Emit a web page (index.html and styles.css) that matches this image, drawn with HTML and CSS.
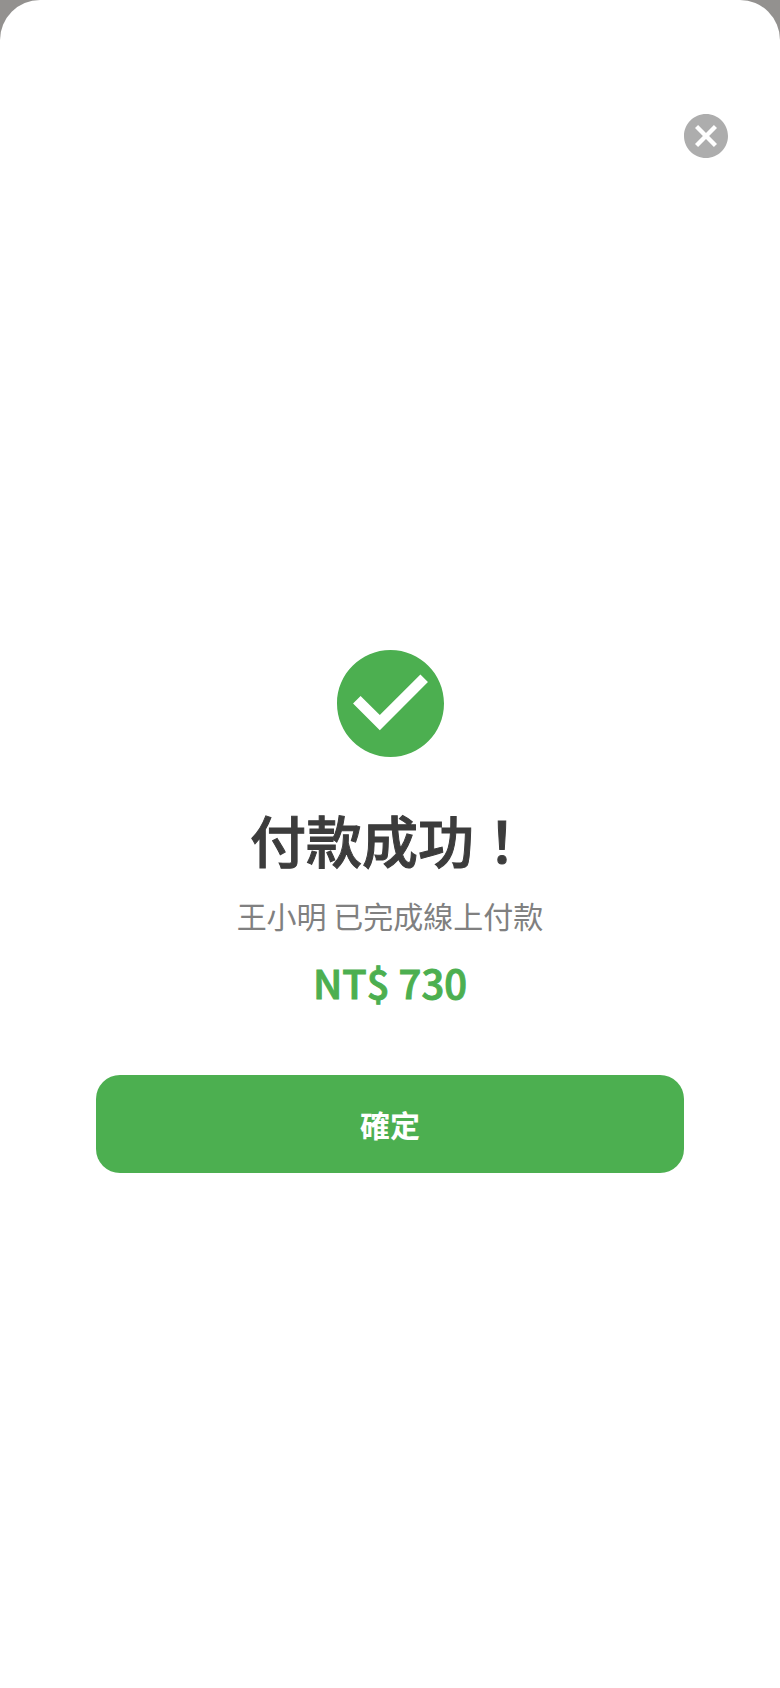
FILE: index.html
```html
<!DOCTYPE html>
<html lang="zh-Hant">

<head>
	<meta charset="UTF-8">
	<meta name="viewport" content="width=device-width, initial-scale=1">
	<title>付款成功</title>
	<link rel="stylesheet" href="styles.css">
</head>

<body>
	<main class="sheet">
		<header class="sheet-header">
			<button type="button" class="close-btn" aria-label="關閉">
				<svg viewBox="2 2 20 20" aria-hidden="true">
					<path fill="#adadad" d="M12 2C6.47 2 2 6.47 2 12s4.47 10 10 10 10-4.47 10-10S17.53 2 12 2zm5 13.59L15.59 17 12 13.41 8.41 17 7 15.59 10.59 12 7 8.41 8.41 7 12 10.59 15.59 7 17 8.41 13.41 12 17 15.59z"/>
				</svg>
			</button>
		</header>

		<section class="result">
			<svg class="result-icon" viewBox="2 2 20 20" aria-hidden="true">
				<path fill="#4caf50" d="M12 2C6.48 2 2 6.48 2 12s4.48 10 10 10 10-4.48 10-10S17.52 2 12 2zm-2 15l-5-5 1.41-1.41L10 14.17l7.59-7.59L19 8l-9 9z"/>
			</svg>
			<h1 class="title">付款成功！</h1>
			<p class="message">王小明 已完成線上付款</p>
			<p class="amount">NT$ 730</p>
			<button type="button" class="confirm-btn">確定</button>
		</section>
	</main>
</body>

</html>
```
FILE: styles.css
```css
* {
	box-sizing: border-box;
}

body {
	margin: 0;
	background-color: #93918f;
	font-family: "Noto Sans CJK TC", sans-serif;
}

.sheet {
	display: flex;
	flex-direction: column;
	min-height: 100vh;
	padding: 114px 52px 24px;
	background-color: #fff;
	border-radius: 40px 40px 0 0;
}

.sheet-header {
	display: flex;
	justify-content: flex-end;
}

.close-btn {
	width: 44px;
	height: 44px;
	padding: 0;
	border: none;
	background: none;
	cursor: pointer;
}

.close-btn svg {
	display: block;
	width: 100%;
}

.result {
	flex: 1;
	display: flex;
	flex-direction: column;
	align-items: center;
	justify-content: center;
	padding: 0 44px;
	text-align: center;
}

.result-icon {
	width: 107px;
	height: 107px;
	margin-bottom: 40px;
}

.title {
	margin: 0 0 12px;
	color: #3c3c3c;
	font-size: 56px;
	font-weight: 500;
	line-height: 84px;
	-webkit-text-stroke: 1px currentColor;
}

.message {
	margin: 0 0 16px;
	color: #808080;
	font-size: 30px;
	line-height: 44px;
}

.amount {
	margin: 0 0 64px;
	color: #4caf50;
	font-size: 40px;
	font-weight: 500;
	line-height: 58px;
	-webkit-text-stroke: 1px currentColor;
}

.confirm-btn {
	width: 100%;
	height: 98px;
	border: none;
	border-radius: 24px;
	background-color: #4caf50;
	color: #fff;
	font-family: inherit;
	font-size: 30px;
	font-weight: 700;
	cursor: pointer;
}
```
